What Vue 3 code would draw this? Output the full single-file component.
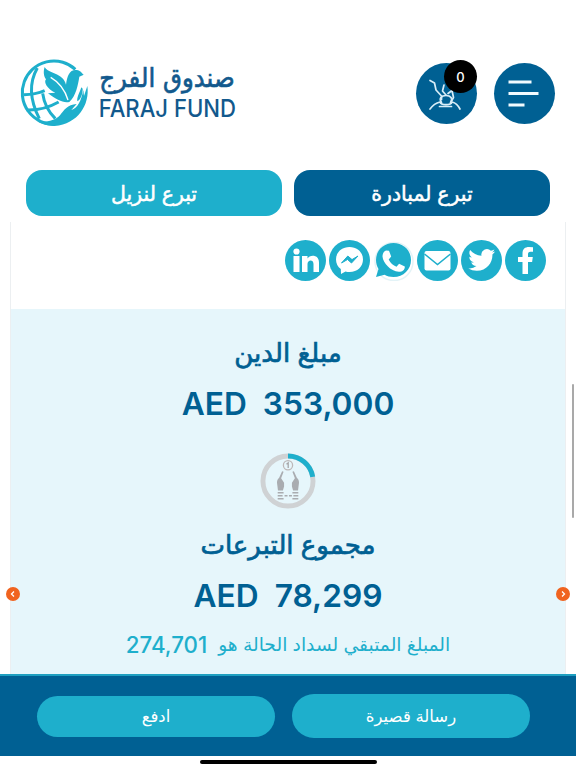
<script setup>
import { computed } from 'vue'

const debt = 353000
const collected = 78299
const cartCount = 0

const format = (n) => n.toLocaleString('en-US')
const remaining = computed(() => debt - collected)

// ring progress, radius 25.5
const ringLength = 2 * Math.PI * 25.5
const ringDash = computed(() => `${(collected / debt) * ringLength} ${ringLength}`)
</script>

<template>
  <div class="page">
    <header class="header">
      <svg class="logo" viewBox="0 0 720 255" role="img" aria-label="Faraj Fund">
        <g fill="none" stroke="#1eafcc" stroke-width="9">
          <path d="M196 58 A95 95 0 1 0 135 223" />
          <path d="M82 54 Q44 120 88 206" />
          <path d="M98 130 Q104 174 136 206" />
          <path d="M42 134 Q76 134 104 122" />
          <path d="M50 180 Q100 182 146 156" />
        </g>
        <g fill="#1eafcc">
          <path d="M104 51 C112 70 160 68 168 104 C172 77 178 58 200 60 C212 61 214 69 221 74 L208 80 C204 104 198 138 178 156 C160 160 140 150 114 130 L136 128 C112 118 100 96 108 88 C100 78 100 62 104 51 Z" />
          <path d="M232 108 C240 164 204 222 134 228 C112 229 94 222 82 214 C108 218 136 212 150 196 C162 180 172 164 200 162 L184 180 C204 174 214 150 220 120 L222 138 Z" />
          <path d="M214 112 L218 116 C218 134 212 148 202 154 C200 142 208 130 214 112 Z" />
        </g>
        <path d="M122 82 Q160 104 174 150" fill="none" stroke="#fff" stroke-width="4" />
        <text class="logo-ar" x="471" y="112" text-anchor="middle" textLength="406" lengthAdjust="spacingAndGlyphs" direction="rtl">صندوق الفرج</text>
        <text class="logo-en" x="266" y="201" textLength="412" lengthAdjust="spacingAndGlyphs">FARAJ FUND</text>
      </svg>

      <div class="actions">
        <button class="round-btn">
          <svg viewBox="0 0 61 61" fill="none" stroke="#d8edf7" stroke-width="1.700" stroke-linecap="round" stroke-linejoin="round">
            <path d="M14 17.500L18.500 20 20 27l5.500 6v3.500M28 22l-1.500 6 3.500 4M35.500 38l2-3.500-1.500-7-4 3" />
            <path d="M25.500 39.500c-3-4 0-7 4.500-7s7.500 3 4.500 7" />
            <path d="M14 46c3-4 6-6 10-7 1 3.500 11 3.500 12 0 4 1 6 3 8 7M23.500 43.500h12" />
          </svg>
          <span class="badge">{{ cartCount }}</span>
        </button>
        <button class="round-btn">
          <svg viewBox="0 0 61 61" stroke="#f2fbff" stroke-width="3">
            <path d="M14.500 19H37.500M14.500 30.500H44.500M14.500 42H30.500" />
          </svg>
        </button>
      </div>
    </header>

    <nav class="tabs">
      <button class="tab light">تبرع لنزيل</button>
      <button class="tab dark">تبرع لمبادرة</button>
    </nav>

    <main class="card">
      <div class="share">
        <svg class="share-icon" viewBox="0 0 41 41">
          <circle cx="20.5" cy="20.5" r="20.5" />
          <path fill="#fff" d="M8.500 16h6v16h-6z M17 16h5.500v2.500c2-4 11.500-4.500 11.500 4V32h-5.500v-8c0-5-6-4.500-6 0v8H17z" />
          <circle class="white" cx="11.500" cy="11.500" r="3.100" />
        </svg>
        <svg class="share-icon" viewBox="0 0 41 41">
          <circle cx="20.5" cy="20.5" r="20.5" />
          <path fill="#fff" d="M20.500 7C12.500 7 7 12.500 7 19.500c0 4 1.800 7.300 4.800 9.600L12 34l4.500-2.500c1.200.4 2.600.5 4 .5C28.500 32 34 26.500 34 19.500S28.500 7 20.500 7z" />
          <path d="M12.500 23l6.300-7 4.200 3.600 6-3.600-6.500 7-4-3.500z" stroke="#1eafcc" stroke-width="1" />
        </svg>
        <svg class="share-icon" viewBox="0 0 41 41">
          <circle cx="21" cy="21.500" r="19" fill="none" stroke="#e3f3f7" stroke-width="1.500" />
          <path d="M20.500 3C10.500 3 3 10.500 3 20c0 3.500 1 6.500 2.500 9L3 37l8.500-2.200c2.600 1.500 5.600 2.200 9 2.200C30.500 37 38 29.500 38 20S30.500 3 20.500 3z" />
          <path fill="#fff" d="M13 10.500l3 .3 2.200 5.700-2.500 3c1.800 3.600 4.300 5.800 7.800 7.200l2.600-3 5.700 2.800c.3 3.500-3 5.500-6 5.300C17.500 31.200 10 23 9.500 16.500c0-2.800 1.300-5.200 3.500-6z" />
        </svg>
        <svg class="share-icon" viewBox="0 0 41 41">
          <circle cx="20.5" cy="20.5" r="20.5" />
          <rect class="white" x="7.500" y="11" width="26" height="19.500" rx="2" />
          <path d="M7.500 14l13 10.500 13-10.500" fill="none" stroke="#1eafcc" stroke-width="1.500" />
        </svg>
        <svg class="share-icon" viewBox="0 0 41 41">
          <circle cx="20.5" cy="20.5" r="20.5" />
          <path fill="#fff" transform="translate(7.300 6.500) scale(1.120)" d="M23.950 4.570a10 10 0 0 1-2.820.780 4.960 4.960 0 0 0 2.160-2.730c-.950.560-2 .960-3.130 1.190a4.920 4.920 0 0 0-8.380 4.480C7.690 8.090 4.070 6.130 1.640 3.160a4.920 4.920 0 0 0 1.520 6.570 4.900 4.900 0 0 1-2.230-.610v.060a4.920 4.920 0 0 0 3.950 4.830 5 5 0 0 1-2.210.080 4.940 4.940 0 0 0 4.600 3.420A9.870 9.870 0 0 1 0 19.540a13.990 13.990 0 0 0 7.550 2.210c9.050 0 14-7.500 14-13.980 0-.210 0-.420-.020-.630a9.940 9.940 0 0 0 2.420-2.570z" />
        </svg>
        <svg class="share-icon" viewBox="0 0 41 41">
          <circle cx="20.5" cy="20.5" r="20.5" />
          <path fill="#fff" d="M17.500 34V22H13v-5h4.500v-3.500C17.500 9 20 7 24 7l4 .2v4.600h-2.500c-2 0-2.500 1-2.500 2.500V17h4.800l-.7 5H23v12z" />
        </svg>
      </div>

      <section class="summary">
        <h2 class="title">مبلغ الدين</h2>
        <p class="amount"><span>AED</span><span>{{ format(debt) }}</span></p>

        <svg class="ring" viewBox="0 0 57 57">
          <circle cx="28.5" cy="28.5" r="25.5" fill="none" stroke="#cfd2d4" stroke-width="5" />
          <circle cx="28.5" cy="28.5" r="25.5" fill="none" stroke="#1eafcc" stroke-width="5" :stroke-dasharray="ringDash" transform="rotate(-90 28.5 28.5)" />
          <circle cx="28.5" cy="12.500" r="4.700" fill="none" stroke="#bdb8b8" stroke-width="1.300" />
          <path d="M27 11.500l1.700-1.500v5.300" fill="none" stroke="#a5a5a7" stroke-width="1.300" />
          <g fill="#a9acb0">
            <path d="M22.500 18.500l1.500.7-2.500 6.500 3 4.500v4l-1.200 4h-5l-1-8c0-2.500.8-3.500 2.200-5z" />
            <path d="M34.500 18.500l-1.500.7 2.500 6.500-3 4.500v4l1.200 4h5l1-8c0-2.500-.8-3.500-2.200-5z" />
          </g>
          <path d="M18 40.500h6M33 40.500h6M18 43.500h5M34 43.500h5M18 46.500h6M33 46.500h6M25 43.500h3M29.500 43.500h3" stroke="#a9acb0" stroke-width="1.500" />
        </svg>

        <h2 class="title">مجموع التبرعات</h2>
        <p class="amount"><span>AED</span><span>{{ format(collected) }}</span></p>
        <p class="remaining">
          <span class="remaining-text">المبلغ المتبقي لسداد الحالة هو</span>
          <span class="remaining-num">{{ format(remaining) }}</span>
        </p>
      </section>
    </main>

    <footer class="pay-bar">
      <button class="pay-btn">ادفع</button>
      <button class="pay-btn tall">رسالة قصيرة</button>
    </footer>
    <div class="home">
      <div class="home-line"></div>
    </div>

    <!-- floating elements over the page -->
    <button class="arrow prev">
      <svg viewBox="0 0 14 14"><path d="M8 4.500L5.500 7 8 9.500" /></svg>
    </button>
    <button class="arrow next">
      <svg viewBox="0 0 14 14"><path d="M6 4.500L8.500 7 6 9.500" /></svg>
    </button>
    <div class="scroll-thumb"></div>
  </div>
</template>

<style>
body {
  margin: 0;
  background: #fff;
}
</style>

<style scoped>
.page {
  position: relative;
  display: flex;
  flex-direction: column;
  width: 576px;
  height: 768px;
  overflow: hidden;
  background: #fff;
  font-family: Inter, 'DejaVu Sans', sans-serif;
}

button {
  border: none;
  padding: 0;
  margin: 0;
  font-family: inherit;
  cursor: pointer;
}

.header {
  display: flex;
  justify-content: space-between;
  align-items: flex-start;
  height: 120px;
  padding: 50px 21px 0 10px;
  flex-shrink: 0;
}

.logo {
  width: 240px;
  height: 85px;
}

.logo-ar {
  font: 80px 'DejaVu Sans', sans-serif;
  fill: #12598d;
  stroke: #12598d;
  stroke-width: 2px;
}

.logo-en {
  font: 500 73px Inter, sans-serif;
  fill: #12598d;
}

.actions {
  display: flex;
  gap: 17px;
  padding-top: 13px;
}

.round-btn {
  position: relative;
  width: 61px;
  height: 61px;
  border-radius: 50%;
  background: #006093;
}

.round-btn svg {
  display: block;
  fill: none;
}

.badge {
  position: absolute;
  top: -3px;
  right: 0;
  width: 33px;
  height: 33px;
  border-radius: 50%;
  background: #000;
  color: #fff;
  font-size: 13px;
  font-weight: 500;
  line-height: 34px;
  text-align: center;
}

.tabs {
  display: flex;
  gap: 12px;
  height: 46px;
  padding: 0 26px 6px;
  flex-shrink: 0;
}

.tab {
  flex: 1;
  border-radius: 16px;
  color: #fff;
  font-size: 20.5px;
  font-weight: 400;
  -webkit-text-stroke: 0.5px;
  direction: rtl;
}

.light {
  background: #1eafcc;
}

.dark {
  background: #006093;
}

.card {
  display: flex;
  flex-direction: column;
  height: 452px;
  margin: 0 10px;
  border: solid #eceff1;
  border-width: 0 1px;
  box-sizing: border-box;
  flex-shrink: 0;
}

.share {
  display: flex;
  justify-content: flex-end;
  gap: 3px;
  height: 69px;
  padding: 18px 19px 0 0;
}

.share-icon {
  width: 41px;
  height: 41px;
  fill: #1eafcc;
}

.white {
  fill: #fff;
}

.summary {
  display: flex;
  flex-direction: column;
  align-items: center;
  flex: 1;
  padding-top: 20px;
  background: #e6f6fb;
  color: #006093;
}

.title {
  height: 49px;
  margin: 0;
  font-size: 26px;
  font-weight: 400;
  line-height: 48px;
  -webkit-text-stroke: 0.7px;
  direction: rtl;
  white-space: nowrap;
}

.amount {
  display: flex;
  gap: 16px;
  height: 52px;
  margin: 0;
  font-size: 31.7px;
  font-weight: 600;
  line-height: 52px;
}

.ring {
  width: 56px;
  height: 56px;
  margin: 23px 0 12px;
}

.remaining {
  display: flex;
  gap: 11px;
  height: 46px;
  margin: 0;
  color: #1eafcc;
  line-height: 46px;
  direction: rtl;
  white-space: nowrap;
}

.remaining-text {
  font-size: 18.7px;
}

.remaining-num {
  font-size: 22.3px;
  font-weight: 500;
}

.pay-bar {
  display: flex;
  justify-content: center;
  align-items: center;
  gap: 17px;
  height: 82px;
  padding-right: 9px;
  border-top: 2px solid #1e9fc0;
  box-sizing: border-box;
  background: #006093;
  flex-shrink: 0;
}

.pay-btn {
  width: 238px;
  height: 41px;
  border-radius: 24px;
  background: #1eafcc;
  color: #fff;
  font-size: 16.5px;
  direction: rtl;
}

.pay-btn.tall {
  height: 44px;
}

.home {
  display: flex;
  justify-content: center;
  padding-top: 4px;
}

.home-line {
  width: 177px;
  height: 4px;
  border-radius: 2px;
  background: #000;
}

.arrow {
  position: absolute;
  top: 587px;
  width: 14px;
  height: 14px;
  border-radius: 50%;
  background: #f0631f;
}

.arrow svg {
  display: block;
  fill: none;
  stroke: #fff;
  stroke-width: 1.3;
}

.prev {
  left: 6px;
}

.next {
  right: 6px;
}

.scroll-thumb {
  position: absolute;
  top: 384px;
  right: 2px;
  width: 2px;
  height: 134px;
  border-radius: 1px;
  background: #a9a9a9;
}
</style>
